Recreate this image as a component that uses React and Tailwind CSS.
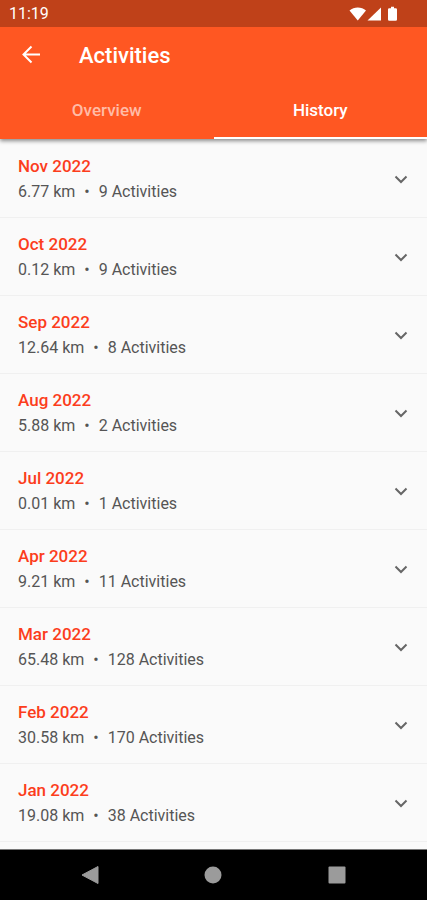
import React, { useState } from 'react';

const months = [
  { name: 'Nov 2022', distance: '6.77 km', count: '9 Activities' },
  { name: 'Oct 2022', distance: '0.12 km', count: '9 Activities' },
  { name: 'Sep 2022', distance: '12.64 km', count: '8 Activities' },
  { name: 'Aug 2022', distance: '5.88 km', count: '2 Activities' },
  { name: 'Jul 2022', distance: '0.01 km', count: '1 Activities' },
  { name: 'Apr 2022', distance: '9.21 km', count: '11 Activities' },
  { name: 'Mar 2022', distance: '65.48 km', count: '128 Activities' },
  { name: 'Feb 2022', distance: '30.58 km', count: '170 Activities' },
  { name: 'Jan 2022', distance: '19.08 km', count: '38 Activities' },
];

const tabs = ['Overview', 'History'];

const StatusBar = () => (
  <div className="flex h-[27px] items-center justify-between bg-[#bf4119] pl-[9px] pr-7 pt-px text-white">
    <span className="text-base">11:19</span>
    <svg width="50" height="16" viewBox="0 0 50 16" fill="currentColor" aria-hidden="true">
      <path d="M0.500 4.500C5 0.400 12.500 0.400 17 4.500L8.750 14.500Z" />
      <path d="M32 1.500V14.500H18.500Z" />
      <path d="M42 0.800h3v1.500h1.700q1.300 0 1.300 1.300v9.900q0 1.300-1.300 1.300h-6.400q-1.300 0-1.300-1.300V3.600q0-1.300 1.300-1.300H42Z" />
    </svg>
  </div>
);

const MonthRow = ({ month }) => {
  const [open, setOpen] = useState(false);

  return (
    <li className="border-b border-[#f0f0f0]">
      <button
        type="button"
        aria-expanded={open}
        onClick={() => setOpen(!open)}
        className="flex h-[77px] w-full items-center justify-between pl-[18px] pr-4 text-left"
      >
        <span className="flex flex-col">
          <span className="text-[17px] font-medium leading-[25px] text-[#fc3d1c]">{month.name}</span>
          <span className="flex gap-[9px] text-base leading-[25px] text-[#555555]">
            <span>{month.distance}</span>
            <span>•</span>
            <span>{month.count}</span>
          </span>
        </span>
        <svg
          width="20"
          height="20"
          viewBox="0 0 20 20"
          fill="none"
          stroke="#666666"
          strokeWidth="2"
          className={open ? 'rotate-180' : ''}
          aria-hidden="true"
        >
          <path d="M4.500 7.500L10 13L15.500 7.500" />
        </svg>
      </button>
    </li>
  );
};

const App = () => {
  const [activeTab, setActiveTab] = useState('History');

  return (
    <div className="flex min-h-screen flex-col bg-[#fafafa] font-['Roboto',sans-serif]">
      <header className="bg-[#ff5722] text-white shadow-[0_2px_4px_rgba(0,0,0,0.45)]">
        <StatusBar />
        <div className="flex h-14 items-center gap-9 pl-5">
          <button type="button" aria-label="Back">
            <svg width="23" height="24" viewBox="0 0 23 24" fill="none" stroke="currentColor" strokeWidth="2" aria-hidden="true">
              <path d="M20 11.500H4M11.500 3.500L3.500 11.500L11.500 19.500" />
            </svg>
          </button>
          <h1 className="text-[22px] font-medium">Activities</h1>
        </div>
        <div role="tablist" className="flex">
          {tabs.map(tab => (
            <button
              key={tab}
              type="button"
              role="tab"
              aria-selected={tab === activeTab}
              onClick={() => setActiveTab(tab)}
              className={`h-14 flex-1 border-b-2 pt-px text-[17px] font-medium ${
                tab === activeTab ? 'border-white text-white' : 'border-transparent text-[#ffbca7]'
              }`}
            >
              {tab}
            </button>
          ))}
        </div>
      </header>

      <main className="flex-1 pb-1 pt-px">
        <ul>
          {months.map(month => (
            <MonthRow key={month.name} month={month} />
          ))}
        </ul>
      </main>

      <nav className="flex h-[51px] items-center justify-around border-t border-[#777777] bg-black px-7 text-[#9b9b9b]">
        <button type="button" aria-label="Back">
          <svg width="18" height="20" viewBox="0 0 18 20" fill="currentColor" aria-hidden="true">
            <path d="M17 1.500V18.500L1 10Z" stroke="currentColor" strokeLinejoin="round" />
          </svg>
        </button>
        <button type="button" aria-label="Home">
          <svg width="18" height="18" viewBox="0 0 18 18" fill="currentColor" aria-hidden="true">
            <circle cx="9" cy="9" r="8.500" />
          </svg>
        </button>
        <button type="button" aria-label="Recent apps">
          <svg width="18" height="18" viewBox="0 0 18 18" fill="currentColor" aria-hidden="true">
            <rect x="0.500" y="0.500" width="17" height="17" rx="1" />
          </svg>
        </button>
      </nav>
    </div>
  );
};

export default App;
